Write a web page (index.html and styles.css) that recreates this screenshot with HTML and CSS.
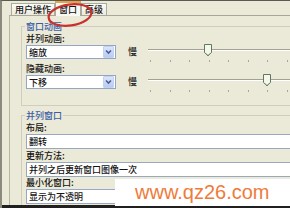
FILE: index.html
```html
<!DOCTYPE html>
<html>
<head>
<meta charset="utf-8">
<link rel="stylesheet" href="styles.css">
</head>
<body>
<div class="window">
  <div class="tabs">
    <div class="tab">用户操作</div>
    <div class="tab active">窗口</div>
    <div class="tab">高级</div>
  </div>
  <div class="panel">
    <div class="group g1">
      <div class="gtitle">窗口动画</div>
      <div class="lbl">并列动画:</div>
      <div class="ctrl-row">
        <div class="select"><span class="val">缩放</span><span class="arrow"><svg width="9" height="10" viewBox="0 0 9 10"><path d="M2 3.5 L4.5 6 L7 3.5" fill="none" stroke="#4a5e8c" stroke-width="1.6"/></svg></span></div>
        <span class="slow">慢</span>
        <div class="slider">
          <div class="track"><svg class="thumb" style="left:56px" width="9" height="13" viewBox="0 0 9 13"><path d="M0.5 0.5 H7.5 V8.5 L4 12 L0.5 8.5 Z" fill="#f6f6ef" stroke="#5d7a5d"/><path d="M1.5 9 L4 11.2 L6.5 9" fill="none" stroke="#9bb59b"/></svg></div>
          <div class="ticks"><i></i><i></i><i></i><i></i><i></i><i></i><i></i><i></i></div>
        </div>
      </div>
      <div class="lbl lbl2">隐藏动画:</div>
      <div class="ctrl-row">
        <div class="select"><span class="val">下移</span><span class="arrow"><svg width="9" height="10" viewBox="0 0 9 10"><path d="M2 3.5 L4.5 6 L7 3.5" fill="none" stroke="#4a5e8c" stroke-width="1.6"/></svg></span></div>
        <span class="slow">慢</span>
        <div class="slider">
          <div class="track"><svg class="thumb" style="left:115px" width="9" height="13" viewBox="0 0 9 13"><path d="M0.5 0.5 H7.5 V8.5 L4 12 L0.5 8.5 Z" fill="#f6f6ef" stroke="#5d7a5d"/><path d="M1.5 9 L4 11.2 L6.5 9" fill="none" stroke="#9bb59b"/></svg></div>
          <div class="ticks"><i></i><i></i><i></i><i></i><i></i><i></i><i></i><i></i></div>
        </div>
      </div>
    </div>
    <div class="group g2">
      <div class="gtitle">并列窗口</div>
      <div class="lbl">布局:</div>
      <div class="field">翻转</div>
      <div class="lbl after">更新方法:</div>
      <div class="field">并列之后更新窗口图像一次</div>
      <div class="lbl">最小化窗口:</div>
      <div class="field">显示为不透明</div>
    </div>
  </div>
  <div class="bottombar"></div>
  <svg class="circle" width="100" height="30" viewBox="0 0 100 30"><ellipse cx="68" cy="14" rx="21.5" ry="10.5" transform="rotate(-8 68 14)" fill="none" stroke="#c8322e" stroke-width="2.2"/></svg>
  <div class="watermark">www.qz26.com</div>
</div>
</body>
</html>
```
FILE: styles.css
```css
body {
  margin: 0;
}
.window {
  width: 290px;
  height: 208px;
  box-sizing: border-box;
  background: #ebe9d7;
  border-top: 1px solid #5a5a52;
  border-left: 2px solid #8c8a7c;
  display: flex;
  flex-direction: column;
  overflow: hidden;
  position: relative;
  font-family: "Noto Sans CJK SC", sans-serif;
  font-size: 9px;
  font-weight: 500;
  line-height: 11px;
  color: #141414;
}
.tabs {
  display: flex;
  align-items: flex-end;
  height: 14px;
  padding-left: 9px;
  flex: none;
}
.tab {
  height: 12px;
  line-height: 12px;
  box-sizing: border-box;
  border: 1px solid #a9ab9b;
  border-bottom: none;
  padding: 0 3px;
  background: linear-gradient(#fbfbf7, #ecebe1);
}
.tab.active {
  height: 15px;
  line-height: 13px;
  background: #f8f7f1;
  border-top: 2px solid #e8a24a;
  margin-bottom: -1px;
  position: relative;
}
.panel {
  flex: 1;
  min-height: 0;
  overflow: hidden;
  margin-left: 7px;
  border-left: 1px solid #b7b5a5;
  border-top: 1px solid #a9a796;
  padding-left: 11px;
  display: flex;
  flex-direction: column;
}
.group {
  border: 1px solid #cfcdbc;
  margin-right: -30px;
  padding: 0 0 16px 4px;
  display: flex;
  flex-direction: column;
  flex: none;
}
.g1 {
  margin-top: 10px;
}
.g2 {
  margin-top: 9px;
}
.gtitle {
  margin-top: -6px;
  margin-left: -1px;
  height: 12px;
  line-height: 12px;
  padding: 0 1px;
  width: fit-content;
  color: #3b5ea6;
  background: #ebe9d7;
}
.lbl {
  height: 11px;
  line-height: 11px;
}
.lbl2 {
  margin-top: 4px;
}
.lbl.after {
  margin-top: 1px;
}
.ctrl-row {
  display: flex;
  align-items: flex-start;
  height: 14px;
  margin-top: 1px;
}
.select {
  width: 90px;
  height: 14px;
  box-sizing: border-box;
  border: 1px solid #93a7c3;
  background: #fff;
  display: flex;
  align-items: center;
  flex: none;
}
.val {
  padding-left: 2px;
}
.arrow {
  margin-left: auto;
  margin-right: 1px;
  width: 9px;
  height: 10px;
  background: linear-gradient(#dbe5fb, #b9cbf3);
  border: 1px solid #c3d1f0;
  border-radius: 1px;
  display: flex;
}
.slow {
  margin-left: 12px;
  line-height: 14px;
  width: 9px;
  flex: none;
}
.slider {
  margin-left: 11px;
  margin-top: -1px;
  width: 150px;
  flex: none;
}
.track {
  height: 13px;
  position: relative;
  background: linear-gradient(to bottom, transparent 5px, #a3a192 5px, #a3a192 6px, #ffffff 6px, #ffffff 7px, transparent 7px);
}
.thumb {
  position: absolute;
  top: 0;
  display: block;
}
.ticks {
  display: flex;
  gap: 18.5px;
  padding-left: 2px;
  margin-top: 3px;
}
.ticks i {
  width: 1px;
  height: 2px;
  background: #a8a696;
}
.field {
  height: 15px;
  box-sizing: border-box;
  margin-top: 1px;
  border: 1px solid #98a8be;
  background: #fff;
  padding-left: 2px;
  line-height: 13px;
}
.bottombar {
  height: 3px;
  background: #202020;
  flex: none;
}
.circle {
  position: absolute;
  left: 0;
  top: 0;
}
.watermark {
  position: absolute;
  left: 113px;
  top: 178px;
  width: 190px;
  height: 27px;
  background: #fff;
  padding-left: 20px;
  box-sizing: border-box;
  font-family: "Liberation Sans", Arial, sans-serif;
  font-size: 20px;
  font-weight: normal;
  line-height: 27px;
  color: #ef7b3b;
}
```
